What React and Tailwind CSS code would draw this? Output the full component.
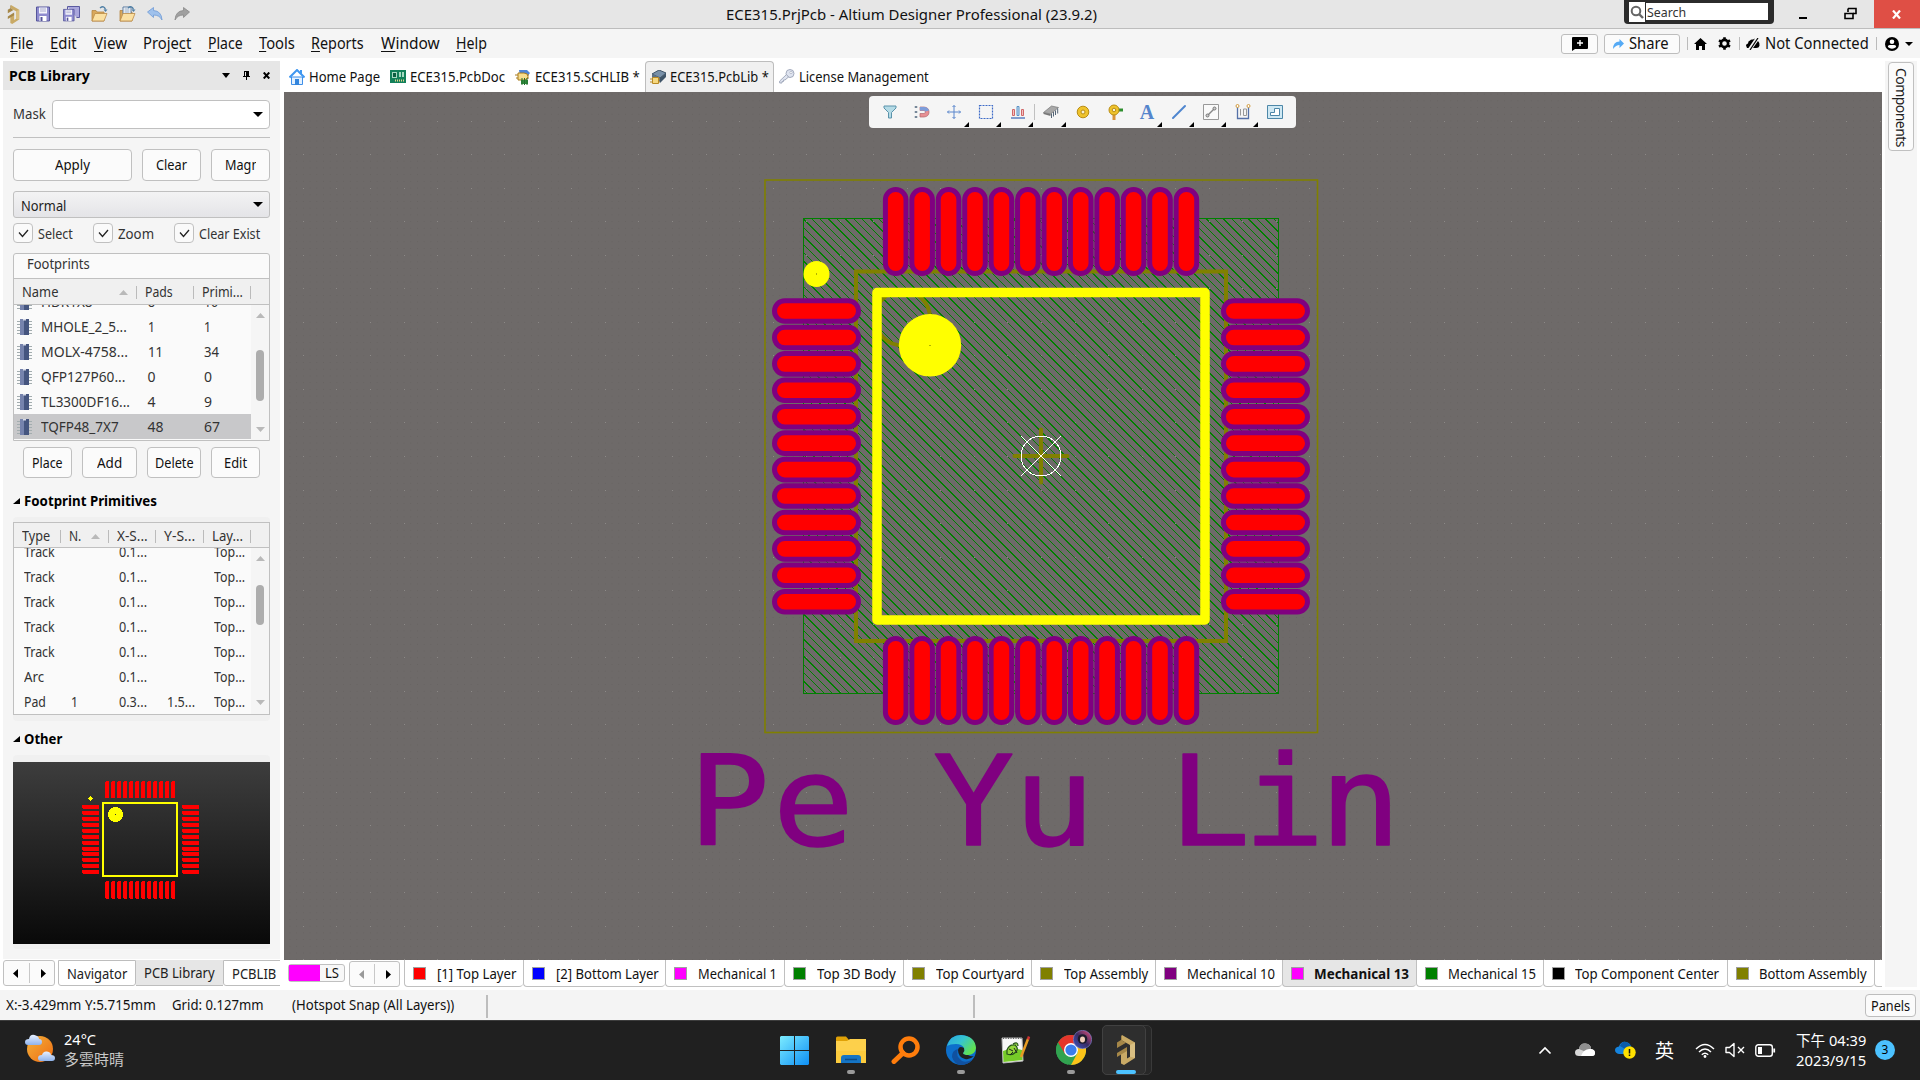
import React, { useLayoutEffect, useRef } from "react";

/* Single line of text squeezed or stretched to the width of its own box */
function T({ className = "", children }) {
  const outer = useRef(null);
  const inner = useRef(null);
  useLayoutEffect(() => {
    const w = outer.current.clientWidth;
    const n = inner.current.offsetWidth;
    if (n > 0 && w > 0) inner.current.style.transform = `scaleX(${w / n})`;
  });
  return (
    <span ref={outer} className={`block shrink-0 whitespace-nowrap ${className}`}>
      <span ref={inner} className="inline-block origin-left">{children}</span>
    </span>
  );
}

const U = ({ children }) => <span className="underline decoration-1 underline-offset-2">{children}</span>;

const Caret = ({ className = "" }) => (
  <svg className={`shrink-0 ${className}`} width="10" height="5" viewBox="0 0 10 5"><path d="M0 0h10L5 5z" fill="currentColor" /></svg>
);
const CaretUp = ({ className = "" }) => (
  <svg className={`shrink-0 ${className}`} width="9" height="5" viewBox="0 0 9 5"><path d="M0 5h9L4.500 0z" fill="#b9b9b9" /></svg>
);

function Altium({ className }) {
  return (
    <svg className={className} viewBox="0 0 20 30">
      <path d="M6 0L19 7.500V23L8 30l-3-1.500V18l6-3.500v9l3-1.800V10L6 5.500z" fill="#c9aa66" />
      <path d="M6 0v5.500l4 2.300L1 13V7.500l4-2.500V1z" fill="#a58748" />
      <path d="M1 18l10-6v4l-10 6z" fill="#a58748" />
      <path d="M14 10l5-2.500V23l-5-1.300z" fill="#d9bf82" />
    </svg>
  );
}

function Floppy({ multi }) {
  return (
    <svg width="17" height="16" viewBox="0 0 17 16">
      {multi && <path d="M4.500.5h12v11h-3M4.500.5v3" fill="#a9a6dc" stroke="#5a5aa0" />}
      <g transform={multi ? "translate(0 3) scale(.82)" : "translate(1 .5)"}>
        <path d="M.5.500h13v14H.5z" fill="#8f8ccf" stroke="#55559b" />
        <path d="M3 1h8v6H3z" fill="#f4f5fb" />
        <path d="M4 2.500h6M4 4.500h6" stroke="#9b9bc4" strokeWidth=".8" />
        <path d="M3.500 9.500h7v5h-7z" fill="#fff" />
        <path d="M4.500 10.500h2v4h-2z" fill="#55559b" />
      </g>
    </svg>
  );
}

function FolderOpen({ doc }) {
  return (
    <svg width="17" height="16" viewBox="0 0 17 16">
      <path d="M1 4.500h4l1 1.500h7v9H1z" fill="#d9a85c" stroke="#b58543" strokeWidth=".8" />
      {doc && <path d="M4 1h8v9H4z" fill="#fff" stroke="#5b7ba0" />}
      {doc && <path d="M5.500 3h5M5.500 5h5M5.500 7h5" stroke="#6f8db0" strokeWidth=".8" />}
      <path d="M1 15l3-7.500h12L13 15z" fill="#fbe0a2" stroke="#bb8c48" strokeWidth=".8" />
      <path d="M9 2q4-3 5.500 1.500" fill="none" stroke="#4f7fa5" strokeWidth="1.400" />
      <path d="M12.500 3.500h4L14.500 6z" fill="#4f7fa5" />
    </svg>
  );
}

function Undo({ flip }) {
  return (
    <svg width="16" height="14" viewBox="0 0 16 14" className={flip ? "-scale-x-100" : ""}>
      <path d="M0.500 5L6.500.500v3q8 .5 8.500 9.500-2.500-5-8.500-5v2.500z" fill={flip ? "#a0a0a0" : "#9fc1ec"} stroke={flip ? "#888" : "#6e9bd6"} strokeWidth=".8" />
    </svg>
  );
}

function TitleBar() {
  return (
    <div className="flex h-[29px] border-b border-[#bdbdbd] bg-[#e6e6e6]">
      <div className="flex w-[726px] items-center">
        <Altium className="ml-[7px] h-[19px] w-[13px]" />
        <div className="ml-[15px] flex items-center gap-[11px]">
          <Floppy /><Floppy multi /><FolderOpen /><FolderOpen doc /><Undo /><Undo flip />
        </div>
      </div>
      <T className="w-[371px] pt-[4px] text-[14.5px] text-[#111]">ECE315.PrjPcb - Altium Designer Professional (23.9.2)</T>
      <div className="ml-[527px] flex h-[24px] w-[150px] gap-px rounded-b bg-[#2b2b2b] pl-[5px] pt-[2px]">
        <div className="flex h-[20px] w-[16px] items-center justify-center bg-white">
          <svg width="14" height="14" viewBox="0 0 14 14"><circle cx="6" cy="6" r="4.300" fill="none" stroke="#666" strokeWidth="2" /><path d="M9 9l4 4" stroke="#666" strokeWidth="2.400" /></svg>
        </div>
        <div className="mt-px h-[17px] w-[122px] bg-white pl-px">
          <T className="w-[39px] text-[13px] leading-[18px] text-[#333]">Search</T>
        </div>
      </div>
      <div className="ml-[25px] mt-[17px] h-[2px] w-[8px] bg-black" />
      <svg className="ml-[37px] mt-[7px]" width="13" height="13" viewBox="0 0 13 13">
        <path d="M4 1.500h8v5h-3M4 1.500V5" fill="none" stroke="#000" strokeWidth="1.600" /><path d="M1 6.500h8v5H1z" fill="none" stroke="#000" strokeWidth="1.600" />
      </svg>
      <div className="ml-auto flex h-[28px] w-[46px] items-center justify-center bg-[#df4f45]">
        <svg className="mr-[2px]" width="9" height="9" viewBox="0 0 9 9"><path d="M1 .5l7 8M8 .5l-7 8" stroke="#fff" strokeWidth="2.200" /></svg>
      </div>
    </div>
  );
}

const Sep = ({ className }) => <div className={`h-[13px] w-px shrink-0 bg-[#bbb] ${className}`} />;

function MenuBar() {
  return (
    <div className="flex h-[29px] items-center bg-[#f5f5f5] text-[16px] text-[#111]">
      <div className="-mt-[2px] ml-[10px] flex gap-[16.400px]">
        <T className="w-[24px]"><U>F</U>ile</T>
        <T className="w-[27px]"><U>E</U>dit</T>
        <T className="w-[33px]"><U>V</U>iew</T>
        <T className="w-[48px]">Proje<U>c</U>t</T>
        <T className="w-[35px]"><U>P</U>lace</T>
        <T className="w-[36px]"><U>T</U>ools</T>
        <T className="w-[53px]"><U>R</U>eports</T>
        <T className="w-[59px]"><U>W</U>indow</T>
        <T className="w-[31px]"><U>H</U>elp</T>
      </div>
      <div className="ml-auto flex items-center">
        <div className="flex h-[20px] w-[37px] items-center justify-center rounded-[3px] border border-[#bdbdbd] bg-[#fbfbfb]">
          <svg width="16" height="14" viewBox="0 0 16 14"><path d="M1 0h14q1 0 1 1v10q0 1-1 1H3l-3 2V1q0-1 1-1z" /><path d="M8 3v6M5 6h6" stroke="#fff" strokeWidth="1.400" /></svg>
        </div>
        <div className="ml-[6px] flex h-[20px] w-[76px] items-center rounded-[3px] border border-[#bdbdbd] bg-[#fbfbfb] pl-[8px]">
          <svg width="11" height="10" viewBox="0 0 11 10"><path d="M0 10Q0 3 6.500 2.600V0L11 4.600 6.500 9V6Q3 6 0 10z" fill="#55aaf5" /></svg>
          <T className="-mt-px ml-[5px] w-[40px] text-[15.500px]">Share</T>
        </div>
        <Sep className="ml-[7px]" />
        <svg className="ml-[6px]" width="13" height="12" viewBox="0 0 13 12"><path d="M6.500 0L13 6h-2v6H8V8H5v4H2V6H0z" /></svg>
        <svg className="ml-[11px]" width="13" height="13" viewBox="-6.500 -6.500 13 13"><circle r="3.600" fill="none" stroke="#000" strokeWidth="2.600" /><path d="M0-6.300V-4M0 4v2.300M-5.500-3.200l2 1.200M3.500 2l2 1.200M-5.500 3.200l2-1.200M3.500-2l2-1.200" stroke="#000" strokeWidth="2.600" /></svg>
        <Sep className="ml-[8px]" />
        <svg className="ml-[6px]" width="14" height="12" viewBox="0 0 14 12"><path d="M1 10L0 7.500Q0 6 2 5.500 2 3 4 2.500 5 1 7 1.500L9 .5 2.500 10zM7 10l5-7q2 2 1.500 4.500Q13 10 10 10z" /><path d="M12 0L4 12" stroke="#000" strokeWidth="1.200" /></svg>
        <T className="-mt-px ml-[5px] w-[104px] text-[16px]">Not Connected</T>
        <Sep className="ml-[7px]" />
        <svg className="ml-[8px]" width="14" height="14" viewBox="0 0 14 14"><circle cx="7" cy="7" r="7" /><circle cx="7" cy="4.700" r="2.300" fill="#fff" /><path d="M2.800 10q0-2 2-2h4.400q2 0 2 2-4.200 3.500-8.400 0z" fill="#fff" /></svg>
        <svg className="ml-[6px] mr-[7px]" width="8" height="4" viewBox="0 0 8 4"><path d="M0 0h8L4 4z" /></svg>
      </div>
    </div>
  );
}

function DocTabs() {
  return (
    <div className="flex h-[31px] items-center text-[14.500px] text-[#111]">
      <svg className="ml-[5px]" width="16" height="16" viewBox="0 0 16 16"><path d="M2.500 8h11v7.500h-11z" fill="#e3f1ff" stroke="#3f8fe8" /><path d="M.5 8.500L8 1l7.500 7.500" fill="none" stroke="#3f97f0" strokeWidth="2" /><path d="M6 10h4v6H6z" fill="#3385dd" /><path d="M12 1v4" stroke="#3f97f0" strokeWidth="2" /></svg>
      <T className="-mt-[2px] ml-[4px] w-[71px]">Home Page</T>
      <svg className="ml-[10px]" width="16" height="13" viewBox="0 0 16 13"><path d="M0 0h16v13H0z" fill="#12805a" /><path d="M2 2h5v6H2zM9 2h2v5H9zM12 2h2v5h-2z" fill="#a6d9c1" /><path d="M3 3h3v4H3z" fill="#0b5d40" /><path d="M5 10.500h10" stroke="#e6d58c" strokeWidth="2" strokeDasharray="1 1" /></svg>
      <T className="-mt-[2px] ml-[4px] w-[95px]">ECE315.PcbDoc</T>
      <svg className="ml-[10px]" width="16" height="16" viewBox="0 0 16 16"><path d="M4 1h8l3 3-3 4H5z" fill="#4f86d8" /><path d="M0 6h14M1 9h13" stroke="#a87b1c" /><path d="M3 4h6q4 0 4 3.500T9 11H3z" fill="#f7dd8d" stroke="#a87b1c" /><path d="M6 11h7v4H6z" fill="#2f8b3c" /><path d="M7 9v7M9.500 9v7M12 9v7" stroke="#236e2e" /></svg>
      <T className="-mt-[2px] ml-[4px] w-[105px]">ECE315.SCHLIB *</T>
      <div className="ml-[5px] flex h-[31px] w-[129px] items-center rounded-t-[4px] border border-b-0 border-[#bdbdbd] bg-[#f0f0f0] pl-[4px]">
        <svg width="16" height="15" viewBox="0 0 16 15"><path d="M2 4l7-4 7 3-6 5z" fill="#7890a8" stroke="#3f5468" /><path d="M10 8l6-5v4l-6 6z" fill="#3f5468" /><path d="M2 4l8 4v4L2 8z" fill="#5b7186" /><path d="M0 9h10M0 12h10" stroke="#b98a24" /><path d="M2.500 7.500h6v6h-6z" fill="#f5d77e" stroke="#b98a24" /></svg>
        <T className="-mt-[3px] ml-[4px] w-[99px]">ECE315.PcbLib *</T>
      </div>
      <svg className="ml-[5px]" width="16" height="15" viewBox="0 0 16 15"><circle cx="11" cy="4.500" r="4" fill="#dfe4f0" stroke="#a3abbd" /><circle cx="12" cy="3.500" r="1.200" fill="#fff" stroke="#a3abbd" strokeWidth=".7" /><path d="M7.500 5.500L.7 12v2H3v-1.500h1.500V11H6l3.500-3z" fill="#dfe4f0" stroke="#a3abbd" /></svg>
      <T className="-mt-[2px] ml-[4px] w-[130px]">License Management</T>
    </div>
  );
}

const BTN = "flex shrink-0 items-center justify-center rounded-[4px] border border-[#c0c0c0] bg-[#fbfbfb] text-[#111]";

function Check() {
  return (
    <div className="flex h-[20px] w-[20px] shrink-0 items-center justify-center rounded-[4px] border border-[#c0c0c0] bg-[#fafafa]">
      <svg width="11" height="9" viewBox="0 0 11 9"><path d="M1 3.500L4.500 7.500 10 1" fill="none" stroke="#222" strokeWidth="1.300" /></svg>
    </div>
  );
}

const Chip = () => (
  <svg className="ml-[3px] shrink-0" width="15" height="16" viewBox="0 0 15 16">
    <path d="M0 2.500h15M0 5.500h15M0 8.500h15M0 11.500h15M0 14.500h15" stroke="#a3adaf" strokeWidth="1.200" />
    <path d="M3 0h9v16H3z" fill="#45557f" /><path d="M3 0h4v16H3z" fill="#7683ad" /><path d="M6 0h3v1.500H6z" fill="#d7dbe8" />
  </svg>
);

function Scroll({ h, thumbClass }) {
  return (
    <div className="flex w-[18px] shrink-0 flex-col items-center bg-[#f5f5f5]">
      <CaretUp className={h === "a" ? "mt-[8px]" : "mt-[8px]"} />
      <div className={`w-[8px] rounded-full bg-[#adadad] ${thumbClass}`} />
      <svg className={h === "a" ? "mt-auto mb-[8px]" : "mt-auto mb-[9px]"} width="9" height="5" viewBox="0 0 9 5"><path d="M0 0h9L4.500 5z" fill="#b9b9b9" /></svg>
    </div>
  );
}

const footprints = [
  ["HDR1X8", "w-[52px]", "8", "w-[7px]", "16", "w-[14px]"],
  ["MHOLE_2_5...", "w-[86px]", "1", "w-[7px]", "1", "w-[7px]"],
  ["MOLX-4758...", "w-[87px]", "11", "w-[15px]", "34", "w-[15px]"],
  ["QFP127P60...", "w-[84px]", "0", "w-[8px]", "0", "w-[8px]"],
  ["TL3300DF16...", "w-[89px]", "4", "w-[8px]", "9", "w-[8px]"],
  ["TQFP48_7X7", "w-[78px]", "48", "w-[16px]", "67", "w-[16px]"],
];

const primitives = [
  ["Track", "w-[31px]", "", "0.1...", ""],
  ["Track", "w-[31px]", "", "0.1...", ""],
  ["Track", "w-[31px]", "", "0.1...", ""],
  ["Track", "w-[31px]", "", "0.1...", ""],
  ["Track", "w-[31px]", "", "0.1...", ""],
  ["Arc", "w-[20px]", "", "0.1...", ""],
  ["Pad", "w-[22px]", "1", "0.3...", "1.5..."],
];

function FootprintTable() {
  return (
    <div className="mt-[10px] flex h-[188px] flex-col rounded-t-[3px] border border-[#c0c0c0] bg-[#fafafa]">
      <div className="flex h-[25px] shrink-0 items-center border-b border-[#c0c0c0] pb-[4px] pl-[13px]"><T className="w-[63px]">Footprints</T></div>
      <div className="flex h-[26px] shrink-0 items-center border-b border-[#c0c0c0] bg-[#f0f0f0] pt-px">
        <T className="ml-[8px] w-[36px]">Name</T><CaretUp className="ml-[61px]" /><Sep className="ml-[8px]" />
        <T className="ml-[8px] w-[28px]">Pads</T><Sep className="ml-[20px]" />
        <T className="ml-[8px] w-[41px]">Primi...</T><Sep className="ml-[7px]" />
      </div>
      <div className="flex min-h-0 grow">
        <div className="flex w-[237px] flex-col justify-end overflow-hidden pb-px">
          {footprints.map(([n, nw, p, pw, q, qw], i) => (
            <div key={n} className={`flex h-[25px] shrink-0 items-center ${i === 5 ? "bg-[#c8c8ca]" : ""}`}>
              <Chip />
              <div className="ml-[9px] w-[106.500px]"><T className={nw}>{n}</T></div>
              <div className="w-[56.500px]"><T className={pw}>{p}</T></div>
              <T className={qw}>{q}</T>
            </div>
          ))}
        </div>
        <Scroll h="a" thumbClass="mt-[32px] h-[51px]" />
      </div>
    </div>
  );
}

function PrimitiveTable() {
  return (
    <div className="flex h-[193px] flex-col border border-[#c0c0c0] bg-[#fafafa]">
      <div className="flex h-[25px] shrink-0 items-center border-b border-[#c0c0c0] bg-[#f0f0f0] pt-[2px]">
        <T className="ml-[8px] w-[28px]">Type</T><Sep className="ml-[10px]" />
        <T className="ml-[8px] w-[12px]">N.</T><CaretUp className="ml-[10px]" /><Sep className="ml-[8px]" />
        <T className="ml-[8px] w-[31px]">X-S...</T><Sep className="ml-[7px]" />
        <T className="ml-[8px] w-[31px]">Y-S...</T><Sep className="ml-[8px]" />
        <T className="ml-[8px] w-[31px]">Lay...</T><Sep className="ml-[7px]" />
      </div>
      <div className="flex min-h-0 grow">
        <div className="flex w-[237px] flex-col justify-end overflow-hidden">
          {primitives.map(([t, tw, n, x, y], i) => (
            <div key={i} className="flex h-[25px] shrink-0 items-center pl-[10px]">
              <div className="w-[47px]"><T className={tw}>{t}</T></div>
              <div className="w-[48px]">{n && <T className="w-[7px]">{n}</T>}</div>
              <div className="w-[48px]"><T className="w-[28px]">{x}</T></div>
              <div className="w-[47px]">{y && <T className="w-[28px]">{y}</T>}</div>
              <T className="w-[31px]">Top...</T>
            </div>
          ))}
        </div>
        <Scroll h="b" thumbClass="mt-[24px] h-[40px]" />
      </div>
    </div>
  );
}

const twelve = Array.from({ length: 12 }, (_, i) => i);

function Preview() {
  return (
    <svg width="257" height="182" viewBox="13 762 257 182" shapeRendering="crispEdges">
      <defs><linearGradient id="pv" x1="0" y1="0" x2="0" y2="1"><stop offset="0" stopColor="#3d3d3d" /><stop offset="1" stopColor="#090909" /></linearGradient></defs>
      <rect x="13" y="762" width="257" height="182" fill="url(#pv)" />
      <g fill="#f00">
        {twelve.map((i) => (
          <React.Fragment key={i}>
            <path d={`M${106 + i * 6} 781h3v17h-4v-16z`} />
            <path d={`M${106 + i * 6} 881h3v18h-3l-1-2v-15z`} />
            <path d={`M82 ${Math.round(805 + i * 5.93)}h16l1 1v3h-16l-1-1z`} />
            <path d={`M182 ${Math.round(805 + i * 5.93)}h16l1 1v3h-16l-1-1z`} />
          </React.Fragment>
        ))}
      </g>
      <rect x="103" y="803" width="74" height="73" fill="none" stroke="#ff0" strokeWidth="2" />
      <circle cx="115.500" cy="814.500" r="7.500" fill="#ff0" />
      <path d="M115 814h1v1h-1z" fill="#333" />
      <path d="M90 796h1v1h1v1h1v1h-1v1h-1v1h-1v-1h-1v-1h-1v-1h1v-1h1z" fill="#ff0" />
    </svg>
  );
}

const SectionTitle = ({ children, w, className }) => (
  <div className={`flex items-center text-[14.500px] font-bold text-black ${className}`}>
    <svg width="7" height="6" viewBox="0 0 7 6"><path d="M7 0v6H0z" /></svg>
    <T className={`-mt-[2px] ml-[4px] ${w}`}>{children}</T>
  </div>
);

function LeftPanel() {
  return (
    <div className="ml-[3px] flex w-[277px] shrink-0 flex-col">
      <div className="mt-[3px] flex h-[29px] shrink-0 items-center bg-[#e6e6e6] text-black">
        <T className="-mt-px ml-[6px] w-[81px] text-[15px] font-bold">PCB Library</T>
        <svg className="ml-[132px]" width="8" height="5" viewBox="0 0 8 5"><path d="M0 0h8L4 5z" /></svg>
        <svg className="ml-[13px]" width="7" height="9" viewBox="0 0 7 9"><path d="M1 0h5v5h1v1H0V5h1zM3 6h1v3H3z" /><path d="M2 1h1v4H2z" fill="#e6e6e6" /></svg>
        <svg className="ml-[13px]" width="7" height="7" viewBox="0 0 7 7"><path d="M.7.500l5.600 6M6.300.500l-5.600 6" stroke="#000" strokeWidth="2" /></svg>
      </div>
      <div className="flex h-[869px] flex-col bg-[#f5f5f5] px-[10px] text-[14px] text-[#333]">
        <div className="mt-[10px] flex h-[29px] shrink-0 items-center">
          <T className="-mt-[2px] w-[33px]">Mask</T>
          <div className="ml-[6px] flex h-[29px] w-[218px] items-center rounded-[4px] border border-[#c0c0c0] bg-white"><Caret className="ml-[200px] text-black" /></div>
        </div>
        <div className="mt-[8px] h-px shrink-0 bg-[#c0c0c0]" />
        <div className="mt-[11px] flex h-[32px] shrink-0 gap-[10px]">
          <div className={`${BTN} w-[119px]`}><T className="w-[35px]">Apply</T></div>
          <div className={`${BTN} w-[59px]`}><T className="w-[31px]">Clear</T></div>
          <div className={`${BTN} w-[59px]`}><div className="w-[31px] overflow-hidden"><T className="w-[48px]">Magnify</T></div></div>
        </div>
        <div className="mt-[10px] flex h-[27px] shrink-0 items-center rounded-[3px] border border-[#c0c0c0] bg-gradient-to-b from-[#f3f3f4] to-[#e4e4e7] pl-[7px] text-[#222]">
          <T className="mt-[3px] w-[45px]">Normal</T><Caret className="ml-[187px] text-black" />
        </div>
        <div className="mt-[5px] flex h-[20px] shrink-0 items-center">
          <Check /><T className="mt-px ml-[5px] w-[35px]">Select</T>
          <div className="w-[20px]" /><Check /><T className="mt-px ml-[5px] w-[36px]">Zoom</T>
          <div className="w-[20px]" /><Check /><T className="mt-px ml-[5px] w-[61px]">Clear Exist</T>
        </div>
        <FootprintTable />
        <div className="ml-[10px] mt-[6px] flex h-[31px] shrink-0 gap-[10px]">
          <div className={`${BTN} w-[49px]`}><T className="w-[31px]">Place</T></div>
          <div className={`${BTN} w-[55px]`}><T className="w-[25px]">Add</T></div>
          <div className={`${BTN} w-[54px]`}><T className="w-[39px]">Delete</T></div>
          <div className={`${BTN} w-[49px]`}><T className="w-[23px]">Edit</T></div>
        </div>
        <SectionTitle w="w-[133px]" className="mt-[12px] h-[22px] shrink-0">Footprint Primitives</SectionTitle>
        <div className="mt-[5px] shrink-0 rounded bg-[#f0f0f0] pb-[6px] pt-[5px]"><PrimitiveTable /></div>
        <SectionTitle w="w-[38px]" className="mt-[7px] h-[22px] shrink-0">Other</SectionTitle>
        <div className="mt-[5px] shrink-0 rounded bg-[#f0f0f0] pb-[5px] pt-[7px]"><Preview /></div>
      </div>
      <div className="mt-px flex h-[26px] shrink-0 overflow-hidden text-[14.500px] text-[#222]">
        <NavArrows className="w-[52px]" />
        <div className="ml-[3px] flex w-[78px] shrink-0 items-center justify-center rounded-b-[3px] border border-[#bdbdbd] bg-white"><T className="-mt-px w-[60px]">Navigator</T></div>
        <div className="flex w-[87px] shrink-0 items-center justify-center border-b border-[#bdbdbd] bg-[#e6e6e6]"><T className="-mt-px w-[71px]">PCB Library</T></div>
        <div className="flex w-[70px] shrink-0 items-center rounded-b-[3px] border border-[#bdbdbd] bg-white pl-[8px]"><T className="-mt-px w-[44px]">PCBLIB</T></div>
      </div>
    </div>
  );
}

function NavArrows({ className, dim }) {
  return (
    <div className={`flex shrink-0 items-center justify-between rounded-[3px] border border-[#c0c0c0] bg-[#fbfbfb] px-[8.500px] ${className}`}>
      <svg width="5" height="9" viewBox="0 0 5 9"><path d="M5 0v9L0 4.500z" fill={dim ? "#999" : "#000"} /></svg>
      <div className="h-[20px] w-px bg-[#c8c8c8]" />
      <svg width="5" height="9" viewBox="0 0 5 9"><path d="M0 0v9l5-4.500z" /></svg>
    </div>
  );
}

/* 45 degree fill lines of the 3D body outline */
const hatchPath = Array.from({ length: 113 }, (_, i) => {
  const x = 803.5 - 475 + 4 + i * 8.4;
  return `M${x.toFixed(1)} 218.5l475 475`;
}).join("");

const majorDots = (() => {
  let d = "";
  for (let i = -22; i <= 25; i++)
    for (let j = -10; j <= 15; j++) d += `M${Math.round(1041 + i * 33.55)} ${Math.round(456 + j * 33.55)}h1v1h-1z`;
  return d;
})();

/* PCB footprint canvas */
function Board() {
  const pitch = 26.43;
  return (
    <svg className="block" width="1598" height="868" viewBox="284 92 1598 868">
      <defs>
        <pattern id="fine" x="1041" y="456" width="6.710" height="6.710" patternUnits="userSpaceOnUse"><rect width="1" height="1" fill="#676361" /></pattern>
        <clipPath id="body"><rect x="803.500" y="218.500" width="475" height="475" /></clipPath>
      </defs>
      <rect x="284" y="92" width="1598" height="868" fill="#6e6a69" />
      <rect x="284" y="92" width="1598" height="868" fill="url(#fine)" />
      <path d={hatchPath} clipPath="url(#body)" stroke="#008000" strokeWidth="1" shapeRendering="crispEdges" />
      <rect x="803.500" y="218.500" width="475" height="475" fill="none" stroke="#008000" />
      <path d={majorDots} fill="#8c8987" shapeRendering="crispEdges" />
      <rect x="765" y="180" width="552.500" height="552.500" fill="none" stroke="#808000" strokeWidth="1.600" />
      <rect x="856" y="271.500" width="370" height="369.500" fill="none" stroke="#808000" strokeWidth="4" />
      <circle cx="902.500" cy="318" r="27.500" fill="none" stroke="#808000" strokeWidth="4" />
      <path d="M1014.500 456h53M1041 429.500v53" stroke="#808000" strokeWidth="4" strokeLinecap="round" />
      {twelve.map((i) => {
        const x = 895.7 + i * pitch;
        const y = 311 + i * pitch;
        return (
          <g key={i} fill="#f00" stroke="#800080" strokeWidth="5">
            <rect x={x - 10.3} y="189.500" width="20.600" height="84" rx="10.300" />
            <rect x={x - 10.3} y="638.500" width="20.600" height="84" rx="10.300" />
            <rect x="774.500" y={y - 10.3} width="84" height="20.600" rx="10.300" />
            <rect x="1223.500" y={y - 10.3} width="84" height="20.600" rx="10.300" />
          </g>
        );
      })}
      <rect x="877" y="292.500" width="328" height="327.500" fill="none" stroke="#ff0" strokeWidth="9.500" strokeLinejoin="round" />
      <circle cx="816.500" cy="274" r="13" fill="#ff0" /><path d="M816 273.500h1v1h-1z" fill="#660" />
      <circle cx="930" cy="345.300" r="31.200" fill="#ff0" /><path d="M929.500 345h1v1h-1z" fill="#660" />
      <g fill="none" stroke="#fff" strokeWidth="1" shapeRendering="crispEdges">
        <circle cx="1041" cy="456" r="20" />
        <path d="M1021 436l40 40M1061 436l-40 40" />
      </g>
      <text transform="translate(0 844.500) scale(1.08 1)" y="0" x="637.500 715.500 790 864 938.500 1010 1082.500 1151.500 1222" xmlSpace="preserve" fill="#800080" stroke="#800080" strokeWidth="1.500" strokeLinejoin="round" className="font-['DejaVu_Sans_Mono'] text-[125px]">Pe Yu Lin</text>
    </svg>
  );
}

const tri = <svg className="absolute bottom-[-7px] right-[-7px]" width="5" height="5" viewBox="0 0 5 5"><path d="M5 0v5H0z" /></svg>;

function Tool({ children, menu, className = "" }) {
  return (
    <div className={`relative flex h-[16px] w-[16px] shrink-0 items-center justify-center ${className}`}>
      <svg width="16" height="16" viewBox="0 0 16 16">{children}</svg>
      {menu && tri}
    </div>
  );
}

function Toolbar() {
  return (
    <div className="absolute left-[585px] top-[4px] flex h-[32px] w-[427px] items-center gap-[16px] rounded-[4px] bg-[#f5f5f5] pl-[12.500px]">
      <Tool><path d="M2 2h12v2L9.500 8.500V14h-3V8.500L2 4z" fill="#b5dbe6" stroke="#5b93ab" /></Tool>
      <Tool><path d="M6 3h4q5 .5 5 5t-5 5H6v-3.500h4q1.500-.3 1.500-1.500T10 6.500H6z" fill="#e88f93" stroke="#b0686e" strokeWidth=".7" /><path d="M6 3h4q4 .3 5 3.500l-3.500 1Q11 6.500 10 6.500H6z" fill="#7d9ddb" /><path d="M2 2v2M2 7v2M2 12v2" stroke="#789" strokeWidth="2.500" /></Tool>
      <Tool menu><path d="M8 1.500v13M1.500 8h13M6.500 3L8 1.500 9.500 3M6.500 13L8 14.500 9.500 13M3 6.500L1.500 8 3 9.500M13 6.500L14.500 8 13 9.500" fill="none" stroke="#5a86cc" strokeWidth="1" /></Tool>
      <Tool menu><path d="M1.500 1.500h13v13h-13z" fill="none" stroke="#3f6cc8" strokeWidth="1.200" strokeDasharray="2 1" /></Tool>
      <Tool menu><path d="M2.500 5.500h2v6h-2zM11.500 5.500h2v6h-2z" fill="#f3c1c1" stroke="#d06868" /><path d="M7 2.500h2v9H7z" fill="#c4dff5" stroke="#5c92c4" /><path d="M1 14h14" stroke="#5b7fc0" strokeWidth="1.500" /></Tool>
      <Tool menu className="ml-[1.500px]"><path d="M.5 8.500L8.500 2l7 1.500-8 6.500z" fill="#a8a8a8" stroke="#777" strokeWidth=".7" /><path d="M.5 8.500L7.500 10v2L.5 10z" fill="#777" /><path d="M8.500 9.500V14M10.500 8v4.500M12.500 6.500V11M14.700 4.500V9.500" stroke="#567" strokeWidth="1" /></Tool>
      <Tool><circle cx="8" cy="8" r="5.800" fill="#efc32c" stroke="#b98d14" /><circle cx="8" cy="8" r="2" fill="#f8f1d4" stroke="#b98d14" /></Tool>
      <Tool><path d="M10 6h6" stroke="#2e8f2e" strokeWidth="3" /><path d="M7 9v7" stroke="#d9943a" strokeWidth="3" /><circle cx="7" cy="6" r="5" fill="#efc32c" stroke="#b98d14" /><circle cx="7" cy="6" r="1.800" fill="#f8f1d4" stroke="#b98d14" /></Tool>
      <div className="relative h-[16px] w-[16px] shrink-0 text-center font-['Liberation_Serif'] text-[20px] font-bold leading-[17px] text-[#5585cc]">A{tri}</div>
      <Tool menu><path d="M2 14L14 2" stroke="#4f86cf" strokeWidth="2" strokeLinecap="round" /></Tool>
      <Tool menu><path d="M.5.500h15v15H.5z" fill="#fafafa" stroke="#999" /><path d="M4 12l8-8" stroke="#888" strokeWidth="1.500" /><circle cx="4.500" cy="11.500" r="1.500" fill="#ccc" stroke="#777" /><circle cx="11.500" cy="4.500" r="1.500" fill="#ccc" stroke="#777" /></Tool>
      <Tool menu><path d="M2.500 3v11.500h11V3" fill="none" stroke="#5571a8" strokeWidth="1.300" /><circle cx="2.500" cy="2" r="1.500" fill="#fff" stroke="#d19a3c" /><circle cx="13.500" cy="2" r="1.500" fill="#fff" stroke="#d19a3c" /><path d="M5.500 5v6.500M8.500 5h3v6.500h-3z" fill="none" stroke="#999" /></Tool>
      <Tool><path d="M.5 1.500h15v13H.5z" fill="#cfe8f3" stroke="#4d87a8" /><path d="M3.500 11.500h9v-7h-5v4h-4z" fill="#fff" stroke="#4d87a8" /></Tool>
      <div className="absolute left-[165px] top-[8px] h-[16px] w-px bg-[#c0c0c0]" />
    </div>
  );
}

const layers = [
  ["[1] Top Layer", "w-[119px]", "w-[79px]", "bg-[#ff0000]"],
  ["[2] Bottom Layer", "w-[142px]", "w-[103px]", "bg-[#0000ff]"],
  ["Mechanical 1", "w-[119px]", "w-[79px]", "bg-[#ff00ff]"],
  ["Top 3D Body", "w-[119px]", "w-[79px]", "bg-[#008000]"],
  ["Top Courtyard", "w-[128px]", "w-[88px]", "bg-[#808000]"],
  ["Top Assembly", "w-[123.500px]", "w-[84px]", "bg-[#808000]"],
  ["Mechanical 10", "w-[127px]", "w-[88px]", "bg-[#800080]"],
  ["Mechanical 13", "w-[134px]", "w-[95px]", "bg-[#ff00ff]"],
  ["Mechanical 15", "w-[127px]", "w-[88px]", "bg-[#008000]"],
  ["Top Component Center", "w-[184px]", "w-[144px]", "bg-black"],
  ["Bottom Assembly", "w-[147px]", "w-[108px]", "bg-[#808000]"],
];

function LayerTabs() {
  return (
    <div className="flex h-[27px] overflow-hidden text-[14px] text-[#111]">
      <div className="ml-[4px] mt-[4px] flex h-[18px] w-[57px] shrink-0 items-center rounded-[3px] border border-[#c0c0c0] bg-[#f8f8f8]">
        <div className="h-full w-[31px] bg-[#ff00ff]" /><T className="ml-[5px] w-[14px]">LS</T>
      </div>
      <NavArrows className="ml-[4px] mt-px h-[26px] w-[51px]" dim />
      <div className="ml-[4px] flex h-[27px]">
        {layers.map(([n, w, tw, c], i) => (
          <div key={n} className={`flex shrink-0 items-center rounded-b-[4px] border-b border-l border-[#c0c0c0] pl-[8px] ${w} ${i === 7 ? "bg-[#e6e6e6] font-bold" : "bg-white"}`}>
            <div className={`h-[13px] w-[13px] border border-[#a0a0a0] ${c}`} />
            <T className={`ml-[10.500px] mt-[2px] ${tw}`}>{n}</T>
          </div>
        ))}
        <div className="w-[8px] rounded-bl-[4px] border-b border-l border-[#c0c0c0]" />
      </div>
    </div>
  );
}

function StatusBar() {
  return (
    <div className="mt-[3px] flex h-[30px] items-center bg-[#f4f4f4] text-[14px] text-[#111]">
      <T className="ml-[6px] w-[150px]">X:-3.429mm Y:5.715mm</T>
      <T className="ml-[16px] w-[92px]">Grid: 0.127mm</T>
      <T className="ml-[28px] w-[162px]">(Hotspot Snap (All Layers))</T>
      <div className="ml-[32px] mt-[3px] h-[23px] w-[2px] bg-[#bdbdbd]" />
      <div className="ml-[485px] mt-[3px] h-[23px] w-[2px] bg-[#bdbdbd]" />
      <div className="ml-auto mr-[4px] mt-px flex h-[23px] w-[51px] items-center justify-center rounded-[4px] border border-[#bdbdbd] bg-[#fbfbfb]"><T className="w-[39px]">Panels</T></div>
    </div>
  );
}

function Slot({ children, dot }) {
  return (
    <div className="flex w-[55px] flex-col items-center pt-[13px]">
      <div className="flex h-[32px] items-center">{children}</div>
      {dot && <div className="mt-[4px] h-[4px] w-[8px] rounded-full bg-[#9a9a9a]" />}
    </div>
  );
}

function Taskbar() {
  return (
    <div className="flex h-[60px] border-t border-[#3d3d3d] bg-[#202020] text-white">
      <svg className="ml-[24px] mt-[12px]" width="32" height="31" viewBox="0 0 32 31">
        <defs>
          <linearGradient id="sun" x1="0" y1="0" x2="1" y2="1"><stop offset="0" stopColor="#f3b13a" /><stop offset="1" stopColor="#ee6c12" /></linearGradient>
          <linearGradient id="cl" x1="0" y1="0" x2="0" y2="1"><stop offset="0" stopColor="#e8f0ff" /><stop offset="1" stopColor="#8fb3ec" /></linearGradient>
        </defs>
        <circle cx="16" cy="16" r="13" fill="url(#sun)" />
        <path d="M4 12q-3 0-3-3t4-3q1-5 5.500-4T15 6q3 0 3 3t-3 3z" fill="url(#cl)" />
        <path d="M17 28q-3 0-3-3t4-3q1-4 5-3.500T27 22q4 0 4 3t-3 3z" fill="url(#cl)" />
      </svg>
      <div className="ml-[8px] mt-[8px] w-[60px]">
        <T className="w-[32px] text-[15px] leading-[20px]">24°C</T>
        <T className="w-[60px] text-[15px] leading-[20px] text-[#c8c8c8] font-['Noto_Sans_CJK_TC']">多雲時晴</T>
      </div>
      <div className="ml-[643px] flex">
        <Slot>
          <svg width="29" height="29" viewBox="0 0 29 29"><defs><linearGradient id="win" x1="0" y1="0" x2="1" y2="1"><stop offset="0" stopColor="#7cecff" /><stop offset="1" stopColor="#0e8ff5" /></linearGradient></defs><path d="M1 0h13v14H0V1zM15 0h13l1 1v13H15zM0 15h14v14H1l-1-1zM15 15h14v13l-1 1H15z" fill="url(#win)" /></svg>
        </Slot>
        <div className="w-px" />
        <Slot dot>
          <svg width="30" height="28" viewBox="0 0 30 28"><path d="M0 2q0-1.500 1.500-1.500H10L13 4v6H0z" fill="#e0a106" /><path d="M0 5h11l3-2h16v24H0z" fill="#fdd04b" /><path d="M0 15h30v12H0z" fill="#fbc52f" opacity=".5" /><path d="M5 27v-5q0-3 3-3h14q3 0 3 3v5z" fill="#1574c4" /><path d="M9 23.500h12" stroke="#0b4c8a" strokeWidth="1.500" /></svg>
        </Slot>
        <Slot>
          <svg width="29" height="28" viewBox="0 0 29 28"><circle cx="18" cy="11" r="8.500" fill="none" stroke="#ff7d0c" strokeWidth="4.500" /><path d="M12 17l-9 8.500" stroke="#ff7d0c" strokeWidth="5" strokeLinecap="round" /></svg>
        </Slot>
        <Slot dot>
          <svg width="30" height="30" viewBox="0 0 30 30">
            <defs><linearGradient id="eg" x1="0" y1="0" x2="1" y2=".6"><stop offset="0" stopColor="#2aa6e0" /><stop offset=".5" stopColor="#36c5d0" /><stop offset="1" stopColor="#63e34b" /></linearGradient></defs>
            <circle cx="15" cy="15" r="15" fill="#0d6fcb" />
            <path d="M1 11Q4 0 15 0q14 1 15 13-1 7-8 7-5 0-5-2 2-2 1-5-2-4-8-4-6 0-9 2z" fill="url(#eg)" />
            <path d="M12 14q-3 7 4 12 5 2 11-2-5 6-12 6-7-1-9-8 0-7 6-8z" fill="#1051a0" />
            <path d="M18 13q-5-3-6 2 0 7 7 9 5 1 9-3-3 1-6-1-5 0-5-2 2-2 1-5z" fill="#202020" />
          </svg>
        </Slot>
        <Slot>
          <svg width="30" height="29" viewBox="0 0 30 29"><path d="M1 2h20l1 23-20 2z" fill="#f7f7f7" stroke="#bbb" /><path d="M2 15q9-4 19-1l.5 10L2.500 26z" fill="#76cb28" /><path d="M2 2h19" stroke="#666" strokeWidth="2" strokeDasharray="1 1.500" /><path d="M6 14q2-6 8-5 4 3 1 7-4 4-9 2zM12 8q5-3 5 2" fill="#92d63a" stroke="#25521a" strokeWidth="1.200" /><path d="M8 13l4 2M9 19l3-3M13 12l3 5" stroke="#222" /><path d="M27 3l-7 18" stroke="#e79b22" strokeWidth="2.500" /><path d="M28 .5l-1 3" stroke="#c33" strokeWidth="2.500" /></svg>
        </Slot>
        <div className="relative">
          <Slot dot>
            <svg width="30" height="30" viewBox="0 0 30 30">
              <circle cx="15" cy="15" r="15" fill="#31a350" />
              <path d="M2 7.500A15 15 0 0 1 28 7.500L15 15H8z" fill="#e5352b" />
              <path d="M28 7.500A15 15 0 0 1 15 30l7-13-4-9.500z" fill="#fcc419" />
              <path d="M2 7.500L9 19l4-10z" fill="#e5352b" /><path d="M2 7.500L8.500 19 15 22l-3 7.700A15 15 0 0 1 2 7.500z" fill="#31a350" />
              <circle cx="15" cy="15" r="7" fill="#fff" /><circle cx="15" cy="15" r="5.600" fill="#3b7ded" />
            </svg>
          </Slot>
          <svg className="absolute left-[30px] top-[9px]" width="19" height="19" viewBox="0 0 19 19"><defs><linearGradient id="av" x1="0" y1="1" x2="1" y2="0"><stop offset="0" stopColor="#3a56c8" /><stop offset=".5" stopColor="#3a2c62" /><stop offset="1" stopColor="#f0507a" /></linearGradient></defs><circle cx="9.500" cy="9.500" r="9.200" fill="url(#av)" stroke="#7a86d8" strokeWidth=".6" /><circle cx="9.500" cy="9" r="4.800" fill="#1c1a2b" /><ellipse cx="9.500" cy="9.500" rx="2.500" ry="3" fill="#f0cdb8" /></svg>
        </div>
        <div className="ml-[4px] mt-[4px] h-[50px] w-[50px] rounded-[5px] border border-[#3a3a3a] bg-[#272727]">
          <div className="-ml-px -mt-px flex h-[50px] w-[44px] flex-col items-center rounded-[5px] border border-[#414141] bg-[#2e2e2e] pl-[4px] pt-[9px]">
            <Altium className="h-[30px] w-[20px]" />
            <div className="mt-[5px] h-[4px] w-[20px] rounded-full bg-[#4cc2ff]" />
          </div>
        </div>
      </div>
      <div className="ml-auto flex items-center pb-px">
        <svg width="14" height="9" viewBox="0 0 14 9"><path d="M1.500 7.500L7 2l5.500 5.500" fill="none" stroke="#fff" strokeWidth="1.700" /></svg>
        <svg className="ml-[23px]" width="20" height="14" viewBox="0 0 20 14"><path d="M4 13Q0 13 0 9.500T4 6q1-6 6.500-5.500T16 6q4 .5 4 4t-4 3z" fill="#d8d8d8" /><path d="M4 6q1-6 6.500-5.500T16 6q-3 0-5 3z" fill="#8f8f8f" /><path d="M6 13q3-8 10-7 4 .5 4 4t-4 3z" fill="#fff" /></svg>
        <svg className="ml-[20px]" width="21" height="18" viewBox="0 0 21 18"><path d="M4 13Q0 12 0 9t4-3.500Q6 0 11 1t5 6l-3 6z" fill="#1583dd" /><path d="M5 5Q7 0 11 1t5 5l-6 2z" fill="#0a5cab" /><circle cx="14.500" cy="11.500" r="6.200" fill="#ffe100" /><path d="M14.500 8v4.500M14.500 13.500v1.600" stroke="#111" strokeWidth="1.500" /></svg>
        <T className="ml-[19px] w-[19px] text-[19px] leading-[24px] font-['Noto_Sans_CJK_TC']">英</T>
        <svg className="ml-[21px]" width="20" height="15" viewBox="0 0 20 15"><path d="M1 6q9-9 18 0M4 9q6-6 12 0M6.800 11.700q3.200-3 6.400 0" fill="none" stroke="#fff" strokeWidth="1.400" /><circle cx="10" cy="13.500" r="1.400" fill="#fff" /></svg>
        <svg className="ml-[10px]" width="20" height="16" viewBox="0 0 20 16"><path d="M1 5.500h3.500L9 1.500v13l-4.500-4H1z" fill="none" stroke="#fff" strokeWidth="1.400" strokeLinejoin="round" /><path d="M13 5l6 6M19 5l-6 6" stroke="#fff" strokeWidth="1.400" /></svg>
        <svg className="ml-[10px]" width="21" height="13" viewBox="0 0 21 13"><rect x=".8" y=".8" width="16.500" height="11.400" rx="2.500" fill="none" stroke="#fff" strokeWidth="1.400" /><path d="M3 3h4v7H3z" fill="#fff" /><path d="M19.200 4.500v4" stroke="#fff" strokeWidth="1.800" /></svg>
        <div className="ml-[20px] w-[70px]">
          <T className="w-[70px] text-[15px] leading-[20px] font-['Noto_Sans','Noto_Sans_CJK_TC']">下午 04:39</T>
          <T className="w-[70px] text-[15px] leading-[20px]">2023/9/15</T>
        </div>
        <div className="ml-[9px] mr-[25px] flex h-[20px] w-[20px] items-center justify-center rounded-full bg-[#4cc2ff] text-[12px] text-black">3</div>
      </div>
    </div>
  );
}

export default function App() {
  return (
    <div className="flex h-[1080px] w-[1920px] flex-col overflow-hidden bg-white font-['Noto_Sans','Noto_Sans_CJK_TC',sans-serif] leading-[20px]">
      <TitleBar />
      <MenuBar />
      <div className="flex h-[929px] shrink-0">
        <LeftPanel />
        <div className="ml-[4px] flex w-[1598px] shrink-0 flex-col">
          <div className="h-[3px] shrink-0" />
          <DocTabs />
          <div className="relative h-[868px] shrink-0"><Board /><Toolbar /></div>
          <LayerTabs />
        </div>
        <div className="ml-[3px] mt-[3px] flex h-[926px] w-[32px] shrink-0 justify-center bg-[#f5f5f5] pt-px">
          <div className="flex h-[89px] w-[26px] items-center rounded-[4px] border border-[#c0c0c0] bg-[#fbfbfb] pt-[5px] text-[14px] leading-[20px] text-[#222] [writing-mode:vertical-rl]">
            <span className="whitespace-nowrap tracking-[-0.550px]">Components</span>
          </div>
        </div>
      </div>
      <StatusBar />
      <Taskbar />
    </div>
  );
}
